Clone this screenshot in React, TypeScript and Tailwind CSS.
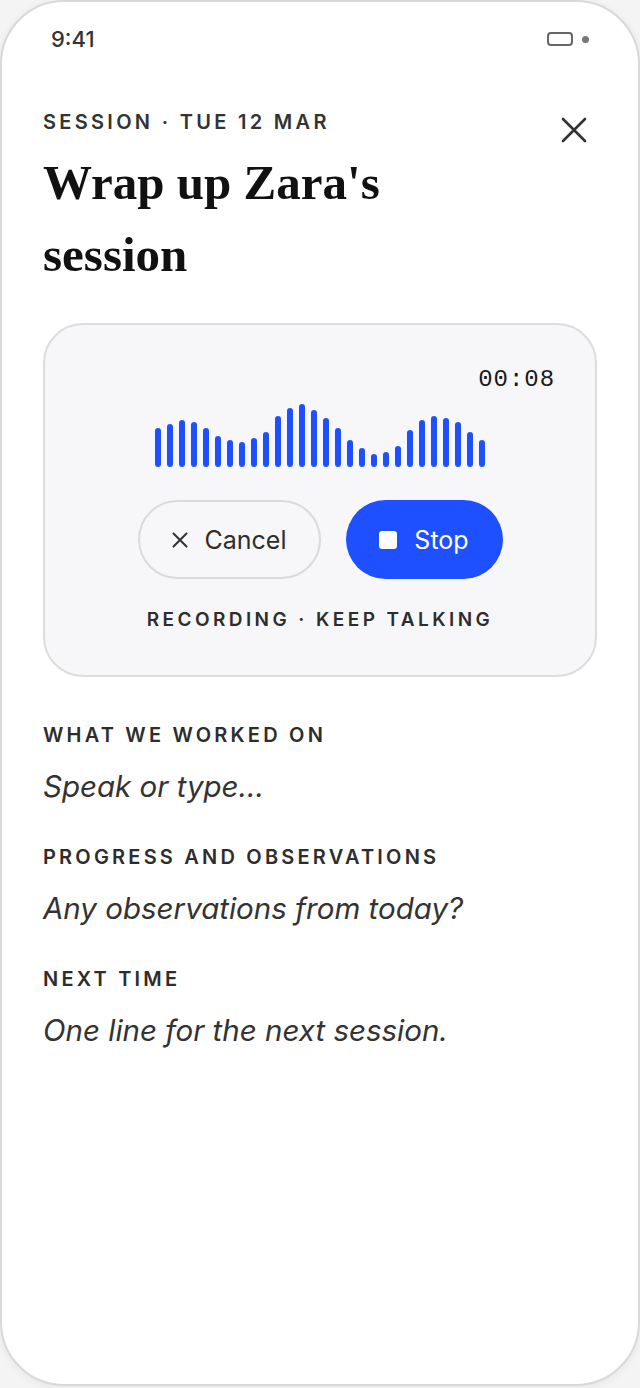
import React from "react";

const bars = [39, 43, 47, 45, 39, 31, 27, 25, 29, 35, 51, 59, 63, 57, 49, 39, 27, 19, 13, 15, 21, 37, 47, 51, 49, 45, 35, 27];

function Section({ label, value }: { label: string; value: string }) {
  return (
    <div className="flex flex-col">
      <div className="text-[20px] leading-[24px] font-semibold tracking-[0.16em] text-[#2d2d2d]">{label}</div>
      <div className="mt-[21px] text-[29.5px] leading-[36px] italic font-normal text-[#333333]">{value}</div>
    </div>
  );
}

export default function App() {
  return (
    <div className="w-[640px] h-[1388px] bg-[#f4f4f4]" style={{ fontFamily: "Inter, 'Noto Sans', sans-serif" }}>
      <div className="w-[640px] h-[1386px] rounded-[64px] border-2 border-[#d9d9d9] bg-white shadow-[0_2px_8px_rgba(0,0,0,0.06)] overflow-hidden flex flex-col">
        {/* status bar */}
        <div className="flex items-center justify-between pl-[49px] pr-[49px] pt-[24px] h-[50px]">
          <div className="text-[22px] leading-[26px] font-medium text-[#333]">9:41</div>
          <div className="flex items-center gap-[9px]">
            <div className="w-[26px] h-[14px] rounded-[4px] border-2 border-[#666]" />
            <div className="w-[7px] h-[7px] rounded-full bg-[#777]" />
          </div>
        </div>

        <div className="px-[41px] flex flex-col">
          {/* header */}
          <div className="flex justify-between items-start mt-[58px]">
            <div className="flex flex-col">
              <div className="text-[20px] leading-[24px] font-semibold tracking-[0.165em] text-[#333]">SESSION · TUE 12 MAR</div>
              <h1
                className="mt-[13px] text-[49px] leading-[72px] font-bold text-[#111]"
                style={{ fontFamily: "'Liberation Serif', 'DejaVu Serif', serif" }}
              >
                Wrap up Zara's
                <br />
                session
              </h1>
            </div>
            <svg width="28" height="28" viewBox="0 0 28 28" className="mt-[6px] mr-[9px]" fill="none">
              <path d="M3 3L25 25M25 3L3 25" stroke="#333" strokeWidth="2.6" strokeLinecap="round" />
            </svg>
          </div>

          {/* recording card */}
          <div className="mt-[32px] rounded-[40px] border-2 border-[#dcdcdc] bg-[#f7f7f9] pt-[41px] pb-[43px] px-[40px] flex flex-col">
            <div className="flex justify-end">
              <div
                className="text-[24px] leading-[28px] text-[#1a1a1a] tracking-[0.04em]"
                style={{ fontFamily: "'Liberation Mono', 'DejaVu Sans Mono', monospace" }}
              >
                00:08
              </div>
            </div>
            <div className="mt-[9px] h-[64px] flex items-end justify-center gap-[6px]">
              {bars.map((h, i) => (
                <div key={i} className="w-[6px] rounded-full bg-[#1f50ff]" style={{ height: h }} />
              ))}
            </div>
            <div className="mt-[33px] flex justify-center gap-[25px]">
              <div className="w-[183px] h-[79px] rounded-full border-2 border-[#dadada] flex items-center justify-center gap-[17px]">
                <svg width="16" height="16" viewBox="0 0 16 16" fill="none">
                  <path d="M1.5 1.5L14.5 14.5M14.5 1.5L1.5 14.5" stroke="#333" strokeWidth="2" strokeLinecap="round" />
                </svg>
                <span className="text-[25px] leading-[28px] text-[#2d2d2d]">Cancel</span>
              </div>
              <div className="w-[157px] h-[79px] rounded-full bg-[#1f50ff] flex items-center justify-center gap-[17px]">
                <div className="w-[18px] h-[18px] rounded-[3px] bg-white" />
                <span className="text-[25px] leading-[28px] text-white">Stop</span>
              </div>
            </div>
            <div className="mt-[29px] text-center text-[19px] leading-[24px] font-semibold tracking-[0.18em] text-[#2d2d2d]">
              RECORDING · KEEP TALKING
            </div>
          </div>

          {/* sections */}
          <div className="mt-[46px] flex flex-col gap-[41px]">
            <Section label="WHAT WE WORKED ON" value="Speak or type..." />
            <Section label="PROGRESS AND OBSERVATIONS" value="Any observations from today?" />
            <Section label="NEXT TIME" value="One line for the next session." />
          </div>
        </div>
      </div>
    </div>
  );
}
